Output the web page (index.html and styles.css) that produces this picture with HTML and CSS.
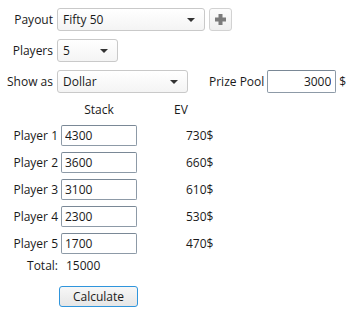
FILE: index.html
```html
<!DOCTYPE html>
<html lang="en">
<head>
  <meta charset="UTF-8">
  <title>ICM Calculator</title>
  <link rel="stylesheet" href="styles.css">
</head>
<body>

  <div class="form">
    <div class="field">
      <label class="lbl" for="payout">Payout</label>
      <div class="select payout">
        <select id="payout">
          <option>Fifty 50</option>
        </select>
      </div>
      <button class="add" title="Add payout">
        <svg width="11" height="11" viewBox="0 0 11 11">
          <path d="M3.5 0h4v3.5H11v4H7.5V11h-4V7.5H0v-4h3.5z" fill="#7b7b7b"/>
        </svg>
      </button>
    </div>

    <div class="field">
      <label class="lbl" for="players">Players</label>
      <div class="select players">
        <select id="players">
          <option>5</option>
        </select>
      </div>
    </div>

    <div class="field">
      <label class="lbl" for="show">Show as</label>
      <div class="select show">
        <select id="show">
          <option>Dollar</option>
        </select>
      </div>
      <label class="pool-lbl" for="pool">Prize Pool</label>
      <input class="pool" id="pool" type="text" value="3000">
      <span class="unit">$</span>
    </div>

    <div class="stacks">
      <div class="head">
        <span></span>
        <span class="stack-h">Stack</span>
        <span class="ev-h">EV</span>
      </div>
      <div class="player">
        <label>Player 1</label>
        <input type="text" value="4300">
        <span class="ev">730$</span>
      </div>
      <div class="player">
        <label>Player 2</label>
        <input type="text" value="3600">
        <span class="ev">660$</span>
      </div>
      <div class="player">
        <label>Player 3</label>
        <input type="text" value="3100">
        <span class="ev">610$</span>
      </div>
      <div class="player">
        <label>Player 4</label>
        <input type="text" value="2300">
        <span class="ev">530$</span>
      </div>
      <div class="player">
        <label>Player 5</label>
        <input type="text" value="1700">
        <span class="ev">470$</span>
      </div>
      <div class="total">
        <span>Total:</span>
        <span class="total-val">15000</span>
      </div>
      <button class="calc">Calculate</button>
    </div>
  </div>

</body>
</html>
```

FILE: styles.css
```css
body {
  margin: 0;
  background-color: #ffffff;
  color: #1a1a1a;
  font-family: 'Open Sans', sans-serif;
  font-size: 12px;
}

.form {
  padding-top: 8px;
}

.field {
  display: flex;
  align-items: center;
  height: 23px;
  margin-bottom: 8px;
}

.lbl {
  width: 53px;
  margin-right: 4px;
  text-align: right;
}

.select {
  position: relative;
  height: 23px;
}

.select select {
  appearance: none;
  -webkit-appearance: none;
  width: 100%;
  height: 100%;
  font: inherit;
  color: #1a1a1a;
  padding: 0 20px 0 5px;
  border: 1px solid #c9c9c9;
  border-radius: 3px;
  background: linear-gradient(#ffffff, #f4f4f4);
}

.select::after {
  content: "";
  position: absolute;
  right: 10px;
  top: 10px;
  border-left: 4px solid transparent;
  border-right: 4px solid transparent;
  border-top: 4px solid #333333;
  pointer-events: none;
}

.payout {
  width: 148px;
}

.players {
  width: 61px;
}

.show {
  width: 131px;
}

.add {
  width: 23px;
  height: 23px;
  margin-left: 4px;
  padding: 0;
  display: flex;
  align-items: center;
  justify-content: center;
  border: 1px solid #d2d2d2;
  border-radius: 3px;
  background: linear-gradient(#fcfcfc, #eeeeee);
}

.pool-lbl {
  margin-left: 21px;
  margin-right: 3px;
}

input {
  font: inherit;
  color: #1a1a1a;
  box-sizing: border-box;
  border: 1px solid #8d9aa7;
  border-top-color: #7a8896;
  border-radius: 2px;
  background-color: #ffffff;
}

.pool {
  width: 69px;
  height: 23px;
  padding: 0 4px;
  text-align: right;
}

.unit {
  margin-left: 3px;
}

.stacks {
  margin-top: 7px;
}

.head, .player, .total {
  display: grid;
  grid-template-columns: 58px 76px auto;
  column-gap: 3px;
  align-items: center;
}

.head {
  height: 16px;
  margin-bottom: 8px;
}

.stack-h {
  text-align: center;
}

.ev-h {
  margin-left: 34px;
}

.player {
  height: 21px;
  margin-bottom: 6px;
}

.player label {
  text-align: right;
  white-space: nowrap;
}

.player input {
  height: 21px;
  padding: 0 3px;
}

.ev {
  margin-left: 46px;
}

.total {
  height: 16px;
  margin-top: -3px;
}

.total span:first-child {
  text-align: right;
}

.total-val {
  padding-left: 5px;
}

.calc {
  display: block;
  margin-top: 13px;
  margin-left: 59px;
  width: 79px;
  height: 21px;
  padding: 0;
  font: inherit;
  color: #1a1a1a;
  border: 1px solid #2f95dc;
  border-radius: 3px;
  background: linear-gradient(#f7f7f7, #e6e6e6);
}
```
